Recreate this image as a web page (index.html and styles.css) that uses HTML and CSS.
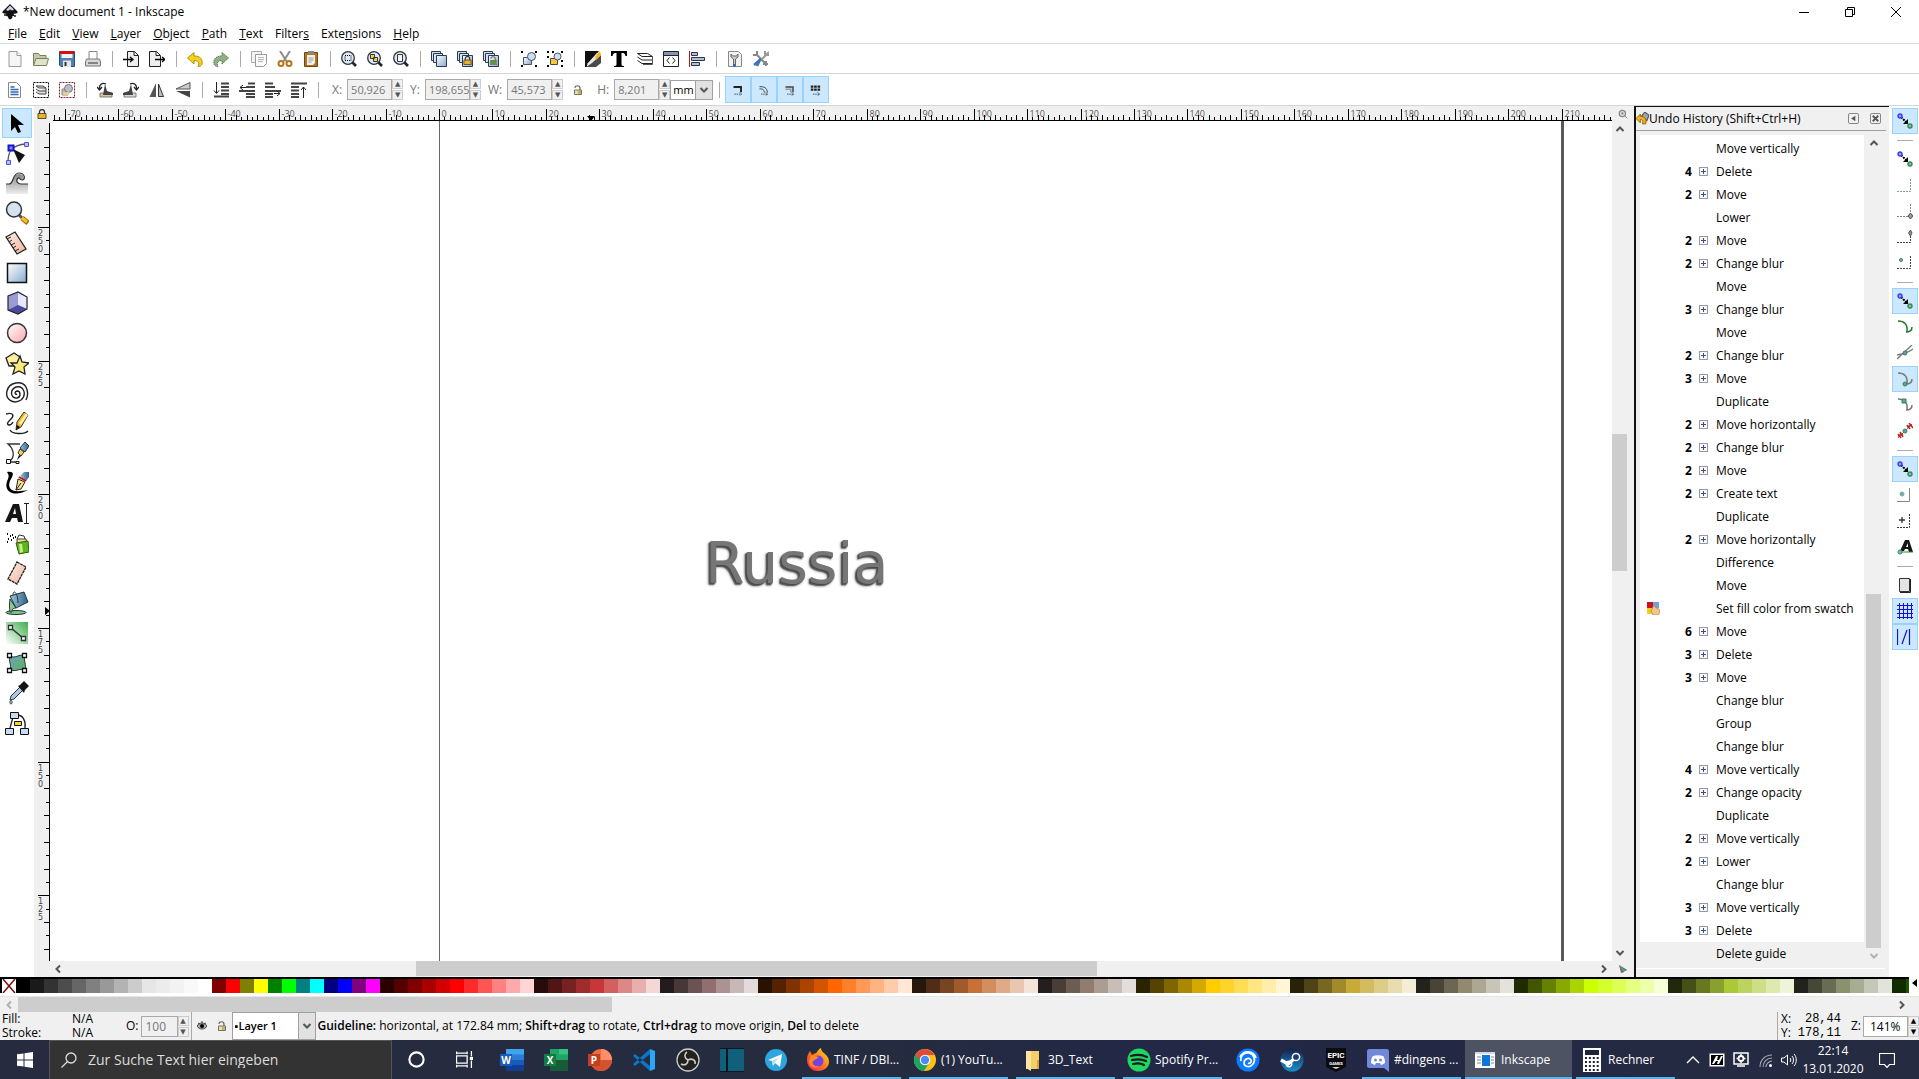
FILE: index.html
```html
<!DOCTYPE html>
<html lang="en">
<head>
<meta charset="utf-8">
<title>*New document 1 - Inkscape</title>
<link rel="stylesheet" href="styles.css">
</head>
<body>
<svg class="sprite" aria-hidden="true">
  <defs>
    <linearGradient id="gBlue" x1="0" y1="0" x2="1" y2="1"><stop offset="0" stop-color="#fff"/><stop offset="1" stop-color="#86aacf"/></linearGradient>
    <linearGradient id="gRed" x1="0" y1="0" x2="1" y2="1"><stop offset="0" stop-color="#fff"/><stop offset="1" stop-color="#ffa5ad"/></linearGradient>
    <linearGradient id="gPeach" x1="0" y1="0" x2="1" y2="1"><stop offset="0" stop-color="#fdeee8"/><stop offset="1" stop-color="#efb49c"/></linearGradient>
    <linearGradient id="gGreen" x1="0" y1="1" x2="1" y2="0"><stop offset="0" stop-color="#fff"/><stop offset="1" stop-color="#3fae4c"/></linearGradient>
    <linearGradient id="gWave" x1="0" y1="0" x2="0" y2="1"><stop offset="0" stop-color="#888"/><stop offset="1" stop-color="#eee"/></linearGradient>
    <linearGradient id="gMesh" x1="0" y1="0" x2="1" y2="1"><stop offset="0" stop-color="#6fa3c8"/><stop offset="1" stop-color="#5bb35a"/></linearGradient>
    <linearGradient id="gSteel" x1="0" y1="0" x2="1" y2="0"><stop offset="0" stop-color="#9cc7e0"/><stop offset="1" stop-color="#2f6187"/></linearGradient>
    <linearGradient id="gInk" x1="0" y1="0" x2="1" y2="1"><stop offset="0" stop-color="#000"/><stop offset="1" stop-color="#eee"/></linearGradient>
    <linearGradient id="gFire" x1="1" y1="0" x2="0" y2="1"><stop offset="0" stop-color="#ffe226"/><stop offset=".5" stop-color="#ff7a1a"/><stop offset="1" stop-color="#f5156c"/></linearGradient>
    <linearGradient id="gSteam" x1="0" y1="0" x2="0" y2="1"><stop offset="0" stop-color="#15224d"/><stop offset="1" stop-color="#1b8fce"/></linearGradient>
  </defs>
  <symbol id="snap" viewBox="0 0 16 16"><path d="M4 4l6 6" stroke="#000" stroke-width="2" stroke-dasharray="2 1"/><path d="M11 6v5H6z" fill="#000"/><circle cx="3" cy="3" r="2" fill="#8fa0ff" stroke="#3a3af0" stroke-width="1.4"/><circle cx="13" cy="13" r="2" fill="#8fb0d8" stroke="#2e8b45" stroke-width="1.4"/></symbol>
  <symbol id="lens" viewBox="0 0 16 16"><path d="M11 11l4 4" stroke="#223" stroke-width="2.6"/><circle cx="7" cy="7" r="6.3" fill="#dfe9f5" stroke="#2b3440" stroke-width="1.3"/></symbol>
  <symbol id="squares" viewBox="0 0 16 16"><path d="M.5.5h9v9h-9z" fill="#d3e2f3" stroke="#2a3b50"/><path d="M2.500 2.500h9v9h-9z" fill="#d3e2f3" stroke="#2a3b50"/><path d="M5.500 4.500h10v11h-10z" fill="url(#gBlue)" stroke="#2a3b50"/></symbol>
  <symbol id="bars" viewBox="0 0 16 16"><path d="M8 1.500h8M8 5h8M8 8.500h8M8 12h8M1 14.500h15" stroke="#444" stroke-width="2"/><path d="M3.500 0v11M1 8.500l2.500 3 2.500-3" fill="none" stroke="#222"/></symbol>
  <symbol id="lock" viewBox="0 0 10 10"><path d="M2.500 5V3a2.500 2.500 0 015 0v2" fill="none" stroke="#333" stroke-width="1.3"/><path d="M1 4.500h8V9.500H1z" fill="#e8b62a" stroke="#3d3110" stroke-width=".8"/></symbol>
  <symbol id="unlock" viewBox="0 0 10 10"><path d="M2 3c0-3 5-3 5 0v2" fill="none" stroke="#666" stroke-width="1.200"/><path d="M1.500 5h7v4.500h-7z" fill="#e9dcae" stroke="#555" stroke-width=".8"/><path d="M5 6h3v3H5z" fill="#c9b24c"/></symbol>
  <symbol id="up" viewBox="0 0 10 10"><path d="M1.500 7L5 3.500 8.500 7" fill="none" stroke="currentColor" stroke-width="2"/></symbol>
  <symbol id="down" viewBox="0 0 10 10"><path d="M1.500 3L5 6.500 8.500 3" fill="none" stroke="currentColor" stroke-width="2"/></symbol>
  <symbol id="left" viewBox="0 0 10 10"><path d="M7 1.500L3.500 5 7 8.500" fill="none" stroke="currentColor" stroke-width="2"/></symbol>
  <symbol id="right" viewBox="0 0 10 10"><path d="M3 1.500L6.500 5 3 8.500" fill="none" stroke="currentColor" stroke-width="2"/></symbol>
  <symbol id="curve" viewBox="0 0 16 16"><path d="M1 2c6 0 10 3 9 11M15 8c0 3-2 5-6 5" fill="none" stroke="currentColor" stroke-width="1.500"/></symbol>
</svg>

<header class="titlebar">
  <svg class="logo" viewBox="0 0 16 16"><path d="M8 0l7 7c1 1 1 2-1 2.500l-3 .5c2 1 2 2-1 2.500 1 1 0 2-2 3-2-1-2-2-2-3-3-.5-3-1.500-1-2.500l-3-.5C0 9 0 8 1 7z" fill="#111"/><path d="M8 1.500l4 4-2 1-2-1-2 1.500-2-1z" fill="#c9d6e8"/><path d="M2 11h3M12 12h2" stroke="#222" stroke-width="1.500"/></svg>
  <h1>*New document 1 - Inkscape</h1>
  <div class="winbtns">
    <button aria-label="Minimize"><svg viewBox="0 0 10 10"><path d="M0 5.500h10" stroke="#000"/></svg></button>
    <button aria-label="Restore"><svg viewBox="0 0 10 10"><path d="M.5 2.500h7v7h-7zM2.500 2.500v-2h7v7h-2" fill="none" stroke="#000"/></svg></button>
    <button aria-label="Close"><svg viewBox="0 0 10 10"><path d="M0 0l10 10M10 0L0 10" stroke="#000"/></svg></button>
  </div>
</header>

<nav class="menubar">
  <button><u>F</u>ile</button><button><u>E</u>dit</button><button><u>V</u>iew</button><button><u>L</u>ayer</button><button><u>O</u>bject</button><button><u>P</u>ath</button><button><u>T</u>ext</button><button>Filter<u>s</u></button><button>Exte<u>n</u>sions</button><button><u>H</u>elp</button>
</nav>

<div class="bar commands" role="toolbar" aria-label="Commands">
  <button aria-label="New"><svg viewBox="0 0 16 16"><path d="M2 .5h8l4 4v11H2z" fill="#f6f6f6" stroke="#999"/><path d="M10 .5v4h4" fill="#fff" stroke="#999"/></svg></button>
  <button aria-label="Open"><svg viewBox="0 0 16 16"><path d="M.5 14V2.500h5l1.500 2h6V8" fill="#c3c9a8" stroke="#77805c"/><path d="M.5 14.500L3 7.500h12.500l-2 7z" fill="#dfe3c9" stroke="#77805c"/></svg></button>
  <button aria-label="Save"><svg viewBox="0 0 16 16"><path d="M.5.5h15v15H2L.5 14z" fill="#4f7fb8" stroke="#2a4a77"/><path d="M2.500 0h11v7h-11z" fill="#f3f3f3"/><path d="M1 0h14v3H1z" fill="#d8100c"/><path d="M4 9.500h8V16H4z" fill="#e5e5e5"/><path d="M5.500 11h2v4h-2z" fill="#333"/></svg></button>
  <button aria-label="Print"><svg viewBox="0 0 16 16"><path d="M4 8V.5h8V8" fill="#fff" stroke="#888"/><path d="M1.500 8h13l1 3v4H.5v-4z" fill="#d8d8d8" stroke="#777"/><path d="M3 12h10" stroke="#666" stroke-width="1.500"/></svg></button>
  <i class="sep"></i>
  <button aria-label="Import"><svg viewBox="0 0 16 16"><path d="M4.500 .5h7l4 4v11h-11z" fill="#eee" stroke="#222"/><path d="M11 .5v4h4" fill="none" stroke="#222"/><path d="M0 8.500h9M7 6l3 2.500L7 11" fill="none" stroke="#000" stroke-width="1.300"/></svg></button>
  <button aria-label="Export"><svg viewBox="0 0 16 16"><path d="M.5.5h7l4 4v11H.5z" fill="#eee" stroke="#222"/><path d="M7 .5v4h4" fill="none" stroke="#222"/><path d="M6 8.500h9M13 6l3 2.500-3 2.500" fill="none" stroke="#000" stroke-width="1.300"/></svg></button>
  <i class="sep"></i>
  <button aria-label="Undo"><svg viewBox="0 0 16 16"><path d="M.5 7L7 1.500V5c6 0 9 3 8 8-1 2-2 2.500-4 2.500 2-4 0-6-4-6V13z" fill="#f2d21e" stroke="#b3900c"/></svg></button>
  <button aria-label="Redo"><svg viewBox="0 0 16 16"><path d="M15.500 7L9 1.500V5C3 5 0 8 1 13c1 2 2 2.500 4 2.500-2-4 0-6 4-6V13z" fill="#8fb086" stroke="#56814c" stroke-dasharray="1.500 .6"/></svg></button>
  <i class="sep"></i>
  <button aria-label="Copy"><svg viewBox="0 0 16 16"><path d="M.5.5h10v11H.5z" fill="#f3f3f3" stroke="#aaa"/><path d="M4.500 3.500h11v9l-3 3h-8z" fill="#fafafa" stroke="#999"/><path d="M7 6.500h6M7 8.500h6M7 10.500h5" stroke="#bbb"/></svg></button>
  <button aria-label="Cut"><svg viewBox="0 0 16 16"><path d="M3 0l7 11M13 0L6 11" stroke="#8d8d8d" stroke-width="2"/><circle cx="4" cy="12.500" r="2.500" fill="none" stroke="#b8741a" stroke-width="2"/><circle cx="12" cy="12.500" r="2.500" fill="none" stroke="#b8741a" stroke-width="2"/></svg></button>
  <button aria-label="Paste"><svg viewBox="0 0 16 16"><path d="M1.500 1.500h13v14h-13z" fill="#b0741e" stroke="#744708"/><path d="M4 4h8v8l-2 2H4z" fill="#f1f1f1"/><path d="M5 0h6v3H5z" fill="#888"/><path d="M5.500 7h5M5.500 9h5M5.500 11h3" stroke="#999"/></svg></button>
  <i class="sep"></i>
  <button aria-label="Zoom selection"><svg viewBox="0 0 16 16"><use href="#lens"/><path d="M4 4.500h6v5H4z" fill="none" stroke="#000" stroke-dasharray="1 1"/></svg></button>
  <button aria-label="Zoom drawing"><svg viewBox="0 0 16 16"><use href="#lens"/><path d="M3.500 3.500h4v4h-4zM6.500 6.500h4v4h-4z" fill="#f5cf50" stroke="#333"/></svg></button>
  <button aria-label="Zoom page"><svg viewBox="0 0 16 16"><use href="#lens"/><path d="M4.500 3.500h5v7h-5z" fill="#fff" stroke="#333"/></svg></button>
  <i class="sep"></i>
  <button aria-label="Duplicate"><svg viewBox="0 0 16 16"><use href="#squares"/></svg></button>
  <button aria-label="Clone"><svg viewBox="0 0 16 16"><use href="#squares"/><use href="#lock" x="6" y="5" width="9" height="9"/></svg></button>
  <button aria-label="Unlink clone"><svg viewBox="0 0 16 16"><use href="#squares"/><use href="#unlock" x="6" y="5" width="9" height="9"/><path d="M8 10h5v3H8z" fill="#5a9a35"/></svg></button>
  <i class="sep"></i>
  <button aria-label="Group"><svg viewBox="0 0 16 16"><path d="M0 0h2v2H0zM14 0h2v2h-2zM0 14h2v2H0zM14 14h2v2h-2z"/><path d="M2.500 6.500h8v7h-8z" fill="url(#gBlue)" stroke="#456"/><circle cx="10.500" cy="5.500" r="4" fill="#cfdff0" stroke="#456"/></svg></button>
  <button aria-label="Ungroup"><svg viewBox="0 0 16 16"><path d="M0 0h2v2H0zM14 0h2v2h-2zM0 14h2v2H0zM14 14h2v2h-2zM5 0h2v2H5zM0 5h2v2H0zM14 9h2v2h-2z"/><path d="M3.500 7.500h7v6h-7z" fill="#f5c93c" stroke="#543"/><circle cx="10.500" cy="5.500" r="3.500" fill="#cfdff0" stroke="#456"/></svg></button>
  <i class="sep"></i>
  <button aria-label="Fill and stroke"><svg viewBox="0 0 16 16"><path d="M0 0h14L2 14v2H0z" fill="#111"/><path d="M2 13L12 2l2 3-6 9z" fill="#e8e8e8"/><path d="M1 16l6-4 9-8v8l-5 4z" fill="#4a4a4a"/><path d="M10 6l5-6 1 4-5 5z" fill="#f4b71d"/></svg></button>
  <button aria-label="Text and font"><svg viewBox="0 0 16 16"><path d="M0 0h16v5h-1.500C14 2.500 13 2 10.500 2v11c0 1.500.5 2 2.500 2v1H3v-1c2 0 2.500-.5 2.500-2V2C3 2 2 2.500 1.500 5H0z"/></svg></button>
  <button aria-label="Layers"><svg viewBox="0 0 16 16"><path d="M.5 2.500h10l5 3H5zM.5 6l4.500 3h10.500M.5 9.500l4.500 3h10.500" fill="none" stroke="#222"/><path d="M15.500 5.500v8H6" fill="none" stroke="#555"/></svg></button>
  <button aria-label="XML editor"><svg viewBox="0 0 16 16"><path d="M.5.5h15v15H.5z" fill="#fff" stroke="#223"/><path d="M1 1h14v3H1z" fill="#8595ab"/><path d="M1 4.500h14" stroke="#223"/><path d="M6.500 6.500L4 9.500l2.500 3M9.500 6.500l2.500 3-2.500 3" fill="none" stroke="#222"/></svg></button>
  <button aria-label="Align"><svg viewBox="0 0 16 16"><path d="M.5 0v16" stroke="#b01818"/><path d="M2.500 1.500h6v3h-6zM2.500 6.500h13v3h-13zM2.500 11.500h8v3h-8z" fill="#a9c2d9" stroke="#334"/></svg></button>
  <i class="sep"></i>
  <button aria-label="Preferences"><svg viewBox="0 0 16 16"><path d="M1.500.5h10l3 3v12h-13z" fill="#f2f2f2" stroke="#888"/><path d="M4 3v3l2.500 2v7h2V8L11 6V3L9.500 5h-4z" fill="#ccc" stroke="#666"/><path d="M6.500 13h2v3h-2z" fill="#3567b5"/></svg></button>
  <button aria-label="Document properties"><svg viewBox="0 0 16 16"><path d="M4 0v4H0M3 3l10 10" fill="none" stroke="#888" stroke-width="2"/><path d="M10 13h5M13 10v5" stroke="#888" stroke-width="2"/><path d="M16 1l-8 8M12 0v4h4" fill="none" stroke="#999" stroke-width="2"/><path d="M8 8l-7 6M7 9l-3 6" stroke="#3b73c0" stroke-width="2.500"/></svg></button>
</div>

<div class="bar controls" role="toolbar" aria-label="Tool controls">
  <button aria-label="Select all"><svg viewBox="0 0 16 16"><path d="M1.500.5h8l4 4v11h-12z" fill="#fff" stroke="#888"/><path d="M3.500 5h4M3.500 7.500h8M3.500 10h8M3.500 12.500h8" stroke="#2f68b0" stroke-width="1.400"/></svg></button>
  <button aria-label="Select all in layers"><svg viewBox="0 0 16 16"><path d="M.5.500h15v15H.5z" fill="none" stroke="#000" stroke-dasharray="2 1"/><path d="M3 4h7l3 2H6zM3 7l3 2h7M3 10l3 2h7V6" fill="#ddd" stroke="#444"/></svg></button>
  <button aria-label="Deselect"><svg viewBox="0 0 16 16"><path d="M.5.5h15v15H.5z" fill="none" stroke="#8c1c1c" stroke-dasharray="2 1"/><path d="M3 7h6v6H3z" fill="#bbb" stroke="#888"/><circle cx="9.500" cy="6.500" r="4" fill="#b9bfc6" stroke="#777"/><path d="M4 10h6v3H4z" fill="#e6cf96"/></svg></button>
  <i class="sep"></i>
  <button aria-label="Rotate left"><svg viewBox="0 0 16 16"><path d="M3 11h12v4H3z" fill="#d8c59a" stroke="#666" stroke-width=".8"/><path d="M8 2l2 7 6 2v2H6z" fill="#444"/><path d="M9 2C5 0 2 3 2.500 7M0 5l2.500 3L5 5" fill="none" stroke="#222" stroke-width="1.300"/></svg></button>
  <button aria-label="Rotate right"><svg viewBox="0 0 16 16"><path d="M1 11h12v4H1z" fill="#d5dbe2" stroke="#666" stroke-width=".8"/><path d="M8 2L6 9l-6 2v2h10z" fill="#444"/><path d="M7 2c4-2 7 1 6.500 5M11 5l2.500 3L16 5" fill="none" stroke="#222" stroke-width="1.300"/></svg></button>
  <button aria-label="Flip horizontal"><svg viewBox="0 0 16 16"><path d="M7 1v14H.5z" fill="#555"/><path d="M9.500 2v12.500h5z" fill="#bbb" stroke="#333"/></svg></button>
  <button aria-label="Flip vertical"><svg viewBox="0 0 16 16"><path d="M1 7h14V.5z" fill="#ccc" stroke="#555"/><path d="M1 9h14v6.500z" fill="#444"/></svg></button>
  <i class="sep"></i>
  <button aria-label="Lower to bottom"><svg viewBox="0 0 16 16"><use href="#bars"/></svg></button>
  <button aria-label="Lower"><svg viewBox="0 0 16 16"><path d="M9 1.500h7M7 5h9M0 9h16M7 12h9M7 15h9" stroke="#444" stroke-width="2"/><path d="M1 5.500h6M4 3L1 5.500 4 8" fill="none" stroke="#222"/></svg></button>
  <button aria-label="Raise"><svg viewBox="0 0 16 16"><path d="M0 1.500h8M0 5h10M0 9h16M0 12h8M0 15h8" stroke="#444" stroke-width="2"/><path d="M9 11.500h6M12 9l3 2.500-3 2.500" fill="none" stroke="#222"/></svg></button>
  <button aria-label="Raise to top"><svg viewBox="0 0 16 16"><path d="M0 1.500h16M0 5h8M0 8.500h8M0 12h8M0 15h8" stroke="#444" stroke-width="2"/><path d="M12.500 16V5M10 8l2.500-3L15 8" fill="none" stroke="#222"/></svg></button>
  <i class="sep"></i>
  <div class="field fx"><label for="fx">X:</label><input id="fx" type="text" value="50,926" disabled><span class="spin"><button disabled aria-label="Increase X">▲</button><button disabled aria-label="Decrease X">▼</button></span></div>
  <div class="field"><label for="fy">Y:</label><input id="fy" type="text" value="198,655" disabled><span class="spin"><button disabled aria-label="Increase Y">▲</button><button disabled aria-label="Decrease Y">▼</button></span></div>
  <div class="field"><label for="fw">W:</label><input id="fw" type="text" value="45,573" disabled><span class="spin"><button disabled aria-label="Increase W">▲</button><button disabled aria-label="Decrease W">▼</button></span></div>
  <button class="ratio" aria-label="Lock ratio"><svg viewBox="0 0 10 10"><use href="#unlock"/></svg></button>
  <div class="field fh"><label for="fh">H:</label><input id="fh" type="text" value="8,201" disabled><span class="spin"><button disabled aria-label="Increase H">▲</button><button disabled aria-label="Decrease H">▼</button></span></div>
  <div class="combo"><select aria-label="Unit"><option>mm</option></select><svg viewBox="0 0 10 10"><use href="#down"/></svg></div>
  <i class="sep"></i>
  <button class="on" aria-label="Scale stroke"><svg viewBox="0 0 16 16"><path d="M2 4h10v7" fill="none" stroke="#222" stroke-width="2.500"/><path d="M3 13.500h9M10 11l3 2.500-3 2.500" fill="none" stroke="#222" stroke-dasharray="2 1"/></svg></button>
  <button class="on" aria-label="Scale corners"><svg viewBox="0 0 16 16"><path d="M2 3.500c6 0 10 1 10.500 8M2 6.500c5 0 6 1 6.500 5" fill="none" stroke="#444" stroke-width="1.300"/><path d="M4 13.500h8M10 11l3 2.500-3 2.500" fill="none" stroke="#222" stroke-dasharray="2 1"/></svg></button>
  <button class="on" aria-label="Move gradients"><svg viewBox="0 0 16 16"><path d="M2 4h10v7" fill="none" stroke="#444" stroke-width="2"/><path d="M2 7h7v4" fill="none" stroke="#999" stroke-width="2"/><path d="M4 13.500h8M10 11l3 2.500-3 2.500" fill="none" stroke="#222" stroke-dasharray="2 1"/></svg></button>
  <button class="on" aria-label="Move patterns"><svg viewBox="0 0 16 16"><path d="M1 3.500h13M1 7.500h13" stroke="#222" stroke-width="3" stroke-dasharray="3.500 1"/><path d="M4 13.500h8M10 11l3 2.500-3 2.500" fill="none" stroke="#222" stroke-dasharray="2 1"/></svg></button>
</div>

<main class="work">
  <div class="toolbox" role="toolbar" aria-label="Tools">
    <button class="on" aria-label="Select"><svg viewBox="0 0 24 24"><path d="M6 3v17l4-4 3 6 3-1-3-7h6z"/></svg></button>
    <button aria-label="Nodes"><svg viewBox="0 0 24 24"><path d="M3 21C3 9 8 4 21 3" fill="none" stroke="#555" stroke-width="1.300"/><path d="M8 8l12 6-6 8z" fill="#111"/><path d="M3.500 4.500h5v5h-5z" fill="#7d8bff" stroke="#1414cc" stroke-width="2"/><path d="M19.500 1.500h4v4h-4zM1.500 19.500h4v4h-4z" fill="#b9bdff" stroke="#5656d8"/></svg></button>
    <button aria-label="Tweak"><svg viewBox="0 0 24 24"><path d="M1 13h3c4 0 3-10 10-10 5 0 6 5 3 6-2 0-2-3-4-2-3 3 0 6 3 6h7v10H1z" fill="url(#gWave)"/><path d="M1 13h3c5 0 3-11 10-11 6 0 7 7 3 7-2 0-2-3-4-2-3 3 0 6 3 6h7" fill="none" stroke="#333" stroke-width="1.200"/></svg></button>
    <button aria-label="Zoom"><svg viewBox="0 0 24 24"><path d="M14 14l3 3" stroke="#555" stroke-width="3"/><path d="M17 17l6 5" stroke="#a06a00" stroke-width="5"/><path d="M17 17l5 4" stroke="#ffc02c" stroke-width="3"/><circle cx="9" cy="8.500" r="7.500" fill="#d4e2f2" stroke="#333" stroke-width="1.500"/></svg></button>
    <button aria-label="Measure"><svg viewBox="0 0 24 24"><path d="M1 6l9-5 11 17-9 5z" fill="url(#gPeach)" stroke="#222" stroke-width="1.300"/><path d="M2 8l4-2M4 11l3-2M6 14l4-2M8 17l3-2M10 20l4-2" stroke="#222"/></svg></button>
    <button aria-label="Rectangle"><svg viewBox="0 0 24 24"><path d="M2.500 2.500h19v19h-19z" fill="url(#gBlue)" stroke="#111" stroke-width="1.500"/></svg></button>
    <button aria-label="3D box"><svg viewBox="0 0 24 24"><path d="M3 5l10-4 9 5v12l-9 5-10-4z" fill="#9a9ad4"/><path d="M13 2l9 4v12l-9-4z" fill="#e8e8ff"/><path d="M3 19l10-5 9 4-9 5z" fill="#4b4b9e"/><path d="M3 5l10-4 9 5v12l-9 5-10-4z" fill="none" stroke="#223" stroke-width="1.200"/></svg></button>
    <button aria-label="Ellipse"><svg viewBox="0 0 24 24"><circle cx="12" cy="12" r="9.500" fill="url(#gRed)" stroke="#333" stroke-width="1.500"/></svg></button>
    <button aria-label="Star"><svg viewBox="0 0 24 24"><path d="M1 7l8-5 6 4-1 9H4z" fill="#fdf0a0" stroke="#222" stroke-width="1.300"/><path d="M15 5l2 6 7 1-5 4 1 7-6-3-6 3 2-7-4-4 6 0z" fill="#fbe87a" stroke="#222" stroke-width="1.300"/></svg></button>
    <button aria-label="Spiral"><svg viewBox="0 0 24 24"><path d="M12 13c-2 1-3-2 0-3 4 0 4 6 0 7-6 1-8-8-1-11C19 4 22 14 16 19 8 24 0 18 2 10 4 1 17-1 21 6c2 4 2 9 0 13" fill="none" stroke="#222" stroke-width="1.400"/></svg></button>
    <button aria-label="Pencil"><svg viewBox="0 0 24 24"><path d="M1 3c8-2 8 2 5 5s-5 5-2 6c2 0 3-1 4-3M5 19c2 4 14 5 18 1" fill="none" stroke="#222" stroke-width="1.400"/><path d="M11 19l1-8 7-10 4 3-7 12z" fill="#f5b52c" stroke="#333"/><path d="M14 12l7-10 2 2-7 10z" fill="#fff09a"/><path d="M11 19l1-5 3 2z" fill="#111"/></svg></button>
    <button aria-label="Pen"><svg viewBox="0 0 24 24"><path d="M12 21H4c8-6 3-15-1-18h12" fill="none" stroke="#333" stroke-width="1.300"/><path d="M15 7l5-6 4 4-4 6z" fill="url(#gSteel)" stroke="#234"/><path d="M13 12l2-4 4 3-3 4z" fill="#f5cf50" stroke="#333"/><path d="M12 19l2-5 2 1z"/><path d="M1.500 18.500h4v4h-4zM11 20.500h3v2h-3z" fill="#fff" stroke="#111"/></svg></button>
    <button aria-label="Calligraphy"><svg viewBox="0 0 24 24"><path d="M2 1c7-1 7 2 4 7s-2 9 1 11 11 1 16 0c-5 3-13 5-18 2C0 18 1 12 3 8c1-3 1-4-1-7z"/><path d="M15 5l4-4h5v5l-3 4z" fill="url(#gSteel)"/><path d="M14 6l7 4" stroke="#c11" stroke-width="2"/><path d="M11 19l2-11 7 3-4 7z" fill="#f8df8b" stroke="#222"/><path d="M11 19l5-7" stroke="#222"/></svg></button>
    <button aria-label="Text"><svg viewBox="0 0 24 24"><path d="M0 21L8 3h6l4 18h-5l-1-4H7l-2 4zM8 13h3l-1-6z" fill="#151515" fill-rule="evenodd"/><path d="M19 2.500h5M21.500 3v19M19 22.500h5" stroke="#222"/></svg></button>
    <button aria-label="Spray"><svg viewBox="0 0 24 24"><path d="M2 3h1M5 5h1M3 8h1M7 4h1M8 7h1M6 9h1M2 11h1M10 6h1" stroke="#000" stroke-width="2"/><path d="M12 8l2-4 5 1 1 3" fill="#fff" stroke="#333"/><path d="M12 8l9 0 1 4-10 1z" fill="#e9d9a0" stroke="#543"/><path d="M11 12l12-2 1 11-10 2z" fill="#5fb51e" stroke="#2e5c0c"/><path d="M14 13l3 0 1 8-3 1z" fill="#c4ef8a"/></svg></button>
    <button aria-label="Eraser"><svg viewBox="0 0 24 24"><path d="M12 1l9 5-9 17-9-5z" fill="url(#gPeach)" stroke="#222" stroke-width="1.300" stroke-dasharray="3 .6"/></svg></button>
    <button aria-label="Paint bucket"><svg viewBox="0 0 24 24"><ellipse cx="11" cy="21.500" rx="10" ry="2" fill="#7fc28a" stroke="#233"/><path d="M5 8l6 9c-5 0-4 4-4 4H5s-1-6 0-13z" fill="#8acb98" stroke="#233"/><path d="M5 5L19 1l4 10-12 6z" fill="url(#gSteel)" stroke="#233"/><path d="M8 4c0-6 5-3 5 8" fill="none" stroke="#333"/></svg></button>
    <button aria-label="Gradient"><svg viewBox="0 0 24 24"><path d="M1 1h22v22H1z" fill="url(#gGreen)"/><path d="M6 7l12 10" stroke="#333" stroke-width="1.500"/><path d="M3.500 4.500h4v4h-4zM16.500 15.500h4v4h-4z" fill="#fff" stroke="#333" stroke-width="1.300"/></svg></button>
    <button aria-label="Mesh"><svg viewBox="0 0 24 24"><path d="M5 5c5 3 9-2 15-1-2 6 2 10 0 15-5-2-9 2-15 0 2-5-2-9 0-14z" fill="url(#gMesh)" stroke="#333"/><path d="M2.500 2.500h4v4h-4zM17.500 2.500h4v4h-4zM2.500 17.500h4v4h-4zM17.500 17.500h4v4h-4z" fill="#fff" stroke="#111" stroke-width="1.300"/></svg></button>
    <button aria-label="Dropper"><svg viewBox="0 0 24 24"><path d="M5 19l1-4 9-9 3 3-9 9z" fill="#a8c8e6" stroke="#333"/><path d="M13 5l2-1 4-4 5 5-4 4-1 3z" fill="#151515"/><path d="M6 19c-2 2-1 4 0 4s2-2 0-4z" fill="#9cc3e6" stroke="#345"/></svg></button>
    <button aria-label="Connector"><svg viewBox="0 0 24 24"><path d="M8 6L5 17M12 4c6 0 9 6 8 13" fill="none" stroke="#222" stroke-width="1.300"/><path d="M5.500 1.500h8v6h-8zM.5 17.500h8v6h-8zM15.500 17.500h8v6h-8z" fill="#c7dcf2" stroke="#111"/><path d="M9.500 10.500h7v4h-7z" fill="#ffd21f" stroke="#111"/></svg></button>
  </div>

  <section class="canvas-area">
    <div class="corner"><svg viewBox="0 0 10 10"><use href="#lock"/></svg></div>
    <div class="ruler-h" id="rulerH"></div>
    <div class="corner"><svg viewBox="0 0 16 16"><circle cx="7" cy="7" r="5" fill="#ddd" stroke="#888" stroke-width="2"/><path d="M5 7h4M7 5v4M11 11l4 4" stroke="#888" stroke-width="1.500"/></svg></div>
    <div class="ruler-v" id="rulerV"></div>
    <div class="canvas">
      <div class="page"><span class="art">Russia</span></div>
    </div>
    <div class="scroll v"><svg viewBox="0 0 10 10"><use href="#up"/></svg><i style="flex-grow:298"></i><b style="flex-grow:137"></b><i style="flex-grow:375"></i><svg viewBox="0 0 10 10"><use href="#down"/></svg></div>
    <div class="corner"></div>
    <div class="scroll h"><svg viewBox="0 0 10 10"><use href="#left"/></svg><i style="flex-grow:350"></i><b style="flex-grow:681"></b><i style="flex-grow:499"></i><svg viewBox="0 0 10 10"><use href="#right"/></svg></div>
    <div class="corner"><svg viewBox="0 0 10 10"><path d="M1 1l8 5-5 3z" fill="#6a8"/><path d="M1 1l2 8 3-1z" fill="#866"/><path d="M1 1l8 5-2 1z" fill="#579"/></svg></div>
  </section>

  <aside class="dock">
    <div class="dock-head">
      <svg viewBox="0 0 12 12"><path d="M5 4l3-4 4 3-2 5z" fill="#9aa7b5" stroke="#556"/><path d="M0 6l4-4v2c4 0 6 2 5 7H6c1-3 0-4-2-4v3z" fill="#f0b41c" stroke="#8a5a06" stroke-width=".8"/></svg>
      <h2>Undo History (Shift+Ctrl+H)</h2>
      <button aria-label="Iconify"><svg viewBox="0 0 12 12"><rect x=".5" y=".5" width="11" height="11" rx="1.500" fill="none" stroke="#777"/><path d="M8 3v6L3.500 6z" fill="#555"/></svg></button>
      <button aria-label="Close dialog"><svg viewBox="0 0 12 12"><rect x=".5" y=".5" width="11" height="11" rx="1.500" fill="none" stroke="#777"/><path d="M3 3l6 6M9 3L3 9" stroke="#555" stroke-width="2"/></svg></button>
    </div>
    <div class="dock-body">
      <ul class="history">
        <li>Move vertically</li>
        <li><b>4</b><button aria-label="Expand"></button>Delete</li>
        <li><b>2</b><button aria-label="Expand"></button>Move</li>
        <li>Lower</li>
        <li><b>2</b><button aria-label="Expand"></button>Move</li>
        <li><b>2</b><button aria-label="Expand"></button>Change blur</li>
        <li>Move</li>
        <li><b>3</b><button aria-label="Expand"></button>Change blur</li>
        <li>Move</li>
        <li><b>2</b><button aria-label="Expand"></button>Change blur</li>
        <li><b>3</b><button aria-label="Expand"></button>Move</li>
        <li>Duplicate</li>
        <li><b>2</b><button aria-label="Expand"></button>Move horizontally</li>
        <li><b>2</b><button aria-label="Expand"></button>Change blur</li>
        <li><b>2</b><button aria-label="Expand"></button>Move</li>
        <li><b>2</b><button aria-label="Expand"></button>Create text</li>
        <li>Duplicate</li>
        <li><b>2</b><button aria-label="Expand"></button>Move horizontally</li>
        <li>Difference</li>
        <li>Move</li>
        <li><svg viewBox="0 0 13 13"><path d="M0 0h6v6H0z" fill="#c8141c"/><path d="M6 0h6v6H6z" fill="#6fa0dc"/><path d="M0 6h6v6H0z" fill="#f2cf1d"/><path d="M6 5l1-2 2 3 3 1 1 3-2 3H6L4 9z" fill="#efc68c" stroke="#b5804a" stroke-width=".7"/></svg>Set fill color from swatch</li>
        <li><b>6</b><button aria-label="Expand"></button>Move</li>
        <li><b>3</b><button aria-label="Expand"></button>Delete</li>
        <li><b>3</b><button aria-label="Expand"></button>Move</li>
        <li>Change blur</li>
        <li>Group</li>
        <li>Change blur</li>
        <li><b>4</b><button aria-label="Expand"></button>Move vertically</li>
        <li><b>2</b><button aria-label="Expand"></button>Change opacity</li>
        <li>Duplicate</li>
        <li><b>2</b><button aria-label="Expand"></button>Move vertically</li>
        <li><b>2</b><button aria-label="Expand"></button>Lower</li>
        <li>Change blur</li>
        <li><b>3</b><button aria-label="Expand"></button>Move vertically</li>
        <li><b>3</b><button aria-label="Expand"></button>Delete</li>
        <li class="current">Delete guide</li>
      </ul>
      <div class="scroll v"><svg viewBox="0 0 10 10"><use href="#up"/></svg><i style="flex-grow:443"></i><b style="flex-grow:354"></b><svg class="dim" viewBox="0 0 10 10"><use href="#down"/></svg></div>
    </div>
  </aside>

  <div class="snapbar" role="toolbar" aria-label="Snapping">
    <button class="on" aria-label="Snap"><svg><use href="#snap"/></svg></button>
    <i class="sep"></i>
    <button aria-label="Bounding boxes"><svg><use href="#snap"/></svg></button>
    <button aria-label="Box edges"><svg viewBox="0 0 16 16"><path d="M0 14.500h13.500V1" fill="none" stroke="#7fa285" stroke-dasharray="2 1"/></svg></button>
    <button aria-label="Box corners"><svg viewBox="0 0 16 16"><path d="M0 13.500h13.500V0" fill="none" stroke="#888" stroke-dasharray="2 1"/><path d="M13.500 10l2.500 3-2.500 3-2.500-3z" fill="#8a9a8c" stroke="#555"/></svg></button>
    <button aria-label="Edge midpoints"><svg viewBox="0 0 16 16"><path d="M0 13.500h13.500V0" fill="none" stroke="#444" stroke-dasharray="2 1"/><path d="M13.500 1l1.500 3-1.500 3-2-3z" fill="#8a9a8c" stroke="#555"/></svg></button>
    <button aria-label="Box centers"><svg viewBox="0 0 16 16"><path d="M0 13.500h13.500V1" fill="none" stroke="#444" stroke-dasharray="2 1"/><circle cx="4" cy="5" r="1.500" fill="#9ab" stroke="#497a50"/></svg></button>
    <i class="sep"></i>
    <button class="on" aria-label="Snap nodes"><svg><use href="#snap"/></svg></button>
    <button class="path" aria-label="Snap to paths"><svg><use href="#curve"/></svg></button>
    <button aria-label="Path intersections"><svg viewBox="0 0 16 16"><path d="M0 14L15 0M0 10c6-1 12-3 16-6" fill="none" stroke="#777" stroke-width="1.300"/><circle cx="8" cy="8" r="2" fill="#6a9ab0" stroke="#2e8b45"/></svg></button>
    <button class="on" aria-label="Cusp nodes"><svg viewBox="0 0 16 16"><use href="#curve"/><circle cx="8" cy="13" r="2" fill="#6a9ab0" stroke="#2e8b45"/></svg></button>
    <button aria-label="Smooth nodes"><svg viewBox="0 0 16 16"><use href="#curve"/><path d="M5 2h4v4H5z" fill="#6a9ab0" stroke="#2e8b45"/></svg></button>
    <button aria-label="Line midpoints"><svg viewBox="0 0 16 16"><path d="M1 15L15 1" stroke="#777"/><path d="M1 11l3 4M3 9l3 5M10 2l3 4M12 0l4 5M1 13l5-2M10 4l5-2" stroke="#c22222" stroke-width="1.500"/><circle cx="8" cy="8" r="2" fill="#6a9ab0" stroke="#2e8b45"/></svg></button>
    <i class="sep"></i>
    <button class="on" aria-label="Other points"><svg><use href="#snap"/></svg></button>
    <button aria-label="Object centers"><svg viewBox="0 0 16 16"><path d="M0 14.500h12.500V1" fill="none" stroke="#888"/><circle cx="5" cy="7" r="2" fill="#6ab07a" stroke="#8ab"/></svg></button>
    <button aria-label="Rotation centers"><svg viewBox="0 0 16 16"><path d="M0 14.500h12.500V1" fill="none" stroke="#333" stroke-dasharray="2 1"/><path d="M2 7h6M5 4v6" stroke="#333" stroke-width="1.300"/></svg></button>
    <button aria-label="Text baselines"><svg viewBox="0 0 16 16"><path d="M3 12L8 1h4l4 12h-4l-1-3H8l-1 2zM9 8h2V4z" fill="#151515" fill-rule="evenodd"/><path d="M3 13h13" stroke="#2e8b45"/><circle cx="3" cy="13" r="2" fill="#8ab0d0" stroke="#2e8b45"/></svg></button>
    <i class="sep"></i>
    <button aria-label="Page border"><svg viewBox="0 0 16 16"><path d="M2.500 1.500h10v13h-10z" fill="#e4e4e4" stroke="#333"/><path d="M13.500 2v13.500H3" fill="none" stroke="#222"/></svg></button>
    <button class="on" aria-label="Grids"><svg viewBox="0 0 16 16"><path d="M0 2.500h16M0 6.500h16M0 10.500h16M0 14.500h16M2.500 0v16M6.500 0v16M10.500 0v16M14.500 0v16" stroke="#1010e0"/></svg></button>
    <button class="on" aria-label="Guides"><svg viewBox="0 0 16 16"><path d="M.5 0v16M12.500 0v16M5 15L10 1" stroke="#1010e0" stroke-width="1.200"/></svg></button>
  </div>
</main>

<section class="palette">
  <div class="swatches" id="swatches"></div>
  <button aria-label="Palette menu"><svg viewBox="0 0 5 8"><path d="M5 0v8L0 4z"/></svg></button>
</section>
<div class="scroll h pal"><svg class="dim" viewBox="0 0 10 10"><use href="#left"/></svg><b style="flex-grow:591"></b><i style="flex-grow:1276"></i><svg viewBox="0 0 10 10"><use href="#right"/></svg></div>

<footer class="status">
  <dl class="style"><dt>Fill:</dt><dd>N/A</dd><dt>Stroke:</dt><dd>N/A</dd></dl>
  <div class="field"><label for="op">O:</label><input id="op" type="text" value="100" disabled><span class="spin"><button disabled aria-label="Increase opacity">▲</button><button disabled aria-label="Decrease opacity">▼</button></span></div>
  <i class="vsep"></i>
  <button class="mini" aria-label="Layer visibility"><svg viewBox="0 0 10 10"><path d="M0 5c2-4 8-4 10 0-2 4-8 4-10 0zM1 2l2 1M5 0v2M9 2L7 3" fill="#aaa" stroke="#444"/><circle cx="5" cy="5" r="2"/></svg></button>
  <button class="mini" aria-label="Layer lock"><svg viewBox="0 0 10 10"><use href="#unlock"/></svg></button>
  <div class="combo layer"><select aria-label="Layer"><option>▪Layer 1</option></select><svg viewBox="0 0 10 10"><use href="#down"/></svg></div>
  <p class="hint"><b>Guideline:</b> horizontal, at 172.84 mm; <b>Shift+drag</b> to rotate, <b>Ctrl+drag</b> to move origin, <b>Del</b> to delete</p>
  <i class="vsep"></i>
  <dl class="coords"><dt>X:</dt><dd>28,44</dd><dt>Y:</dt><dd>178,11</dd></dl>
  <div class="field zoom"><label for="zm">Z:</label><input id="zm" type="text" value="141%"><span class="spin"><button aria-label="Zoom in">▲</button><button aria-label="Zoom out">▼</button></span></div>
</footer>

<div class="taskbar">
  <button class="start" aria-label="Start"><svg viewBox="0 0 16 16"><path d="M0 2.300L6.500 1.400v6.100H0zM7.500 1.200L16 0v7.500H7.500zM0 8.500h6.500v6.100L0 13.700zM7.500 8.500H16V16l-8.500-1.200z" fill="#fff"/></svg></button>
  <div class="search"><svg viewBox="0 0 16 16"><circle cx="10" cy="6" r="5" fill="none" stroke="#ddd" stroke-width="1.300"/><path d="M6.500 9.500L.5 15.500" stroke="#ddd" stroke-width="1.300"/></svg><input type="text" aria-label="Search" placeholder="Zur Suche Text hier eingeben"></div>
  <button class="sys" aria-label="Cortana"><svg viewBox="0 0 16 16"><circle cx="8" cy="8" r="6.700" fill="none" stroke="#fff" stroke-width="2"/></svg></button>
  <button class="sys" aria-label="Task view"><svg viewBox="0 0 16 16"><path d="M.5 4.500h10v7H.5zM.5 3V.500M10.500 3V.5M.5 2h10M.5 15.500V13M10.500 15.500V13M.5 14h10M14.500 0v5M14.500 9v7" fill="none" stroke="#fff" stroke-width="1.200"/><path d="M13 5.500h3v3h-3z" fill="#fff"/></svg></button>
  <button class="app" aria-label="Word"><svg viewBox="0 0 24 24"><path d="M6 1h18v6H6z" fill="#41a5ee"/><path d="M6 6.500h18V12H6z" fill="#2b7cd3"/><path d="M6 12h18v5.500H6z" fill="#185abd"/><path d="M6 17h18v6H6z" fill="#103f91"/><path d="M0 6h12v12H0z" fill="#185abd"/><text x="6" y="16" text-anchor="middle">W</text></svg></button>
  <button class="app" aria-label="Excel"><svg viewBox="0 0 24 24"><path d="M6 1h18v6H6z" fill="#33c481"/><path d="M6 6.500h18V12H6z" fill="#21a366"/><path d="M6 12h18v11H6z" fill="#185c37"/><path d="M6 1h9v11H6z" fill="#21a366"/><path d="M0 6h12v12H0z" fill="#107c41"/><text x="6" y="16" text-anchor="middle">X</text></svg></button>
  <button class="app" aria-label="PowerPoint"><svg viewBox="0 0 24 24"><circle cx="13" cy="12" r="11" fill="#ed6c47"/><path d="M13 1a11 11 0 0111 11H13z" fill="#ff8f6b"/><path d="M2 12h22a11 11 0 01-22 0z" fill="#d35230"/><path d="M0 6h12v12H0z" fill="#c43e1c"/><text x="6" y="16" text-anchor="middle">P</text></svg></button>
  <button class="app" aria-label="Visual Studio Code"><svg viewBox="0 0 24 24"><path d="M1 8l2-2 15 12v5zM1 16l2 2L18 6V1z" fill="#0a78c8"/><path d="M18 1l5 2v18l-5 2z" fill="#2aa8f5"/></svg></button>
  <button class="app" aria-label="OBS"><svg viewBox="0 0 24 24"><circle cx="12" cy="12" r="11" fill="#23211f" stroke="#ccc" stroke-width="1.300"/><path d="M12 12c-4-2-4-6-1-8M12 12c4-2 8 0 7 4M12 12c0 4-3 6-7 4" fill="none" stroke="#ccc" stroke-width="1.600"/></svg></button>
  <button class="app" aria-label="Terminal"><svg viewBox="0 0 24 24"><path d="M0 0h24v24H0z" fill="#125f7b"/><path d="M0 0h24v1H0zM0 23h24v1H0zM6 0h2v24H6z" fill="#051820"/></svg></button>
  <button class="app" aria-label="Telegram"><svg viewBox="0 0 24 24"><circle cx="12" cy="12" r="11" fill="#2ca5e0"/><path d="M4 12l14-6-2 13-5-4-2 3-1-5z" fill="#fff"/><path d="M8 13l7-4-5 6-1 3z" fill="#b8d8ea"/></svg></button>
  <button class="win"><svg viewBox="0 0 24 24"><path d="M12 23C5 23 1 18 1 12c0-4 1-6 3-9l2 4c3-2 5-2 5-3 1-2 2-3 4-4 0 3 2 4 4 6 2 2 4 4 4 8 0 5-5 9-11 9z" fill="url(#gFire)"/><circle cx="12" cy="13" r="5.500" fill="#7542e5"/><path d="M5 8c3-1 6 0 8 2-3 0-3 2-6 3-2 3 1 6 6 5-5 4-10 0-10-5z" fill="#ff8a1f"/></svg><span>TINF / DBI...</span></button>
  <button class="win"><svg viewBox="0 0 24 24"><circle cx="12" cy="12" r="11" fill="#fbc116"/><path d="M12 7h9.500A11 11 0 002.500 6.500L7 15z" fill="#de4a3c"/><path d="M2.500 6.500A11 11 0 0011 23l5-8-8-1z" fill="#1da462"/><circle cx="12" cy="12" r="5.200" fill="#fff"/><circle cx="12" cy="12" r="4.200" fill="#4a8af4"/></svg><span>(1) YouTu...</span></button>
  <button class="win"><svg viewBox="0 0 24 24"><path d="M6 3h13v18H6z" fill="#f5cf68"/><path d="M6 3h5v20l-5-3z" fill="#ffe6a0"/><path d="M17 12h2v9h-2z" fill="#d9a63c"/></svg><span>3D_Text</span></button>
  <button class="win"><svg viewBox="0 0 24 24"><circle cx="12" cy="12" r="11.500" fill="#1ed760"/><path d="M4 8c6-2 12-1 16 1M5 12c5-1 10-1 14 1M6 16c4-1 8-1 11 1" fill="none" stroke="#191b22" stroke-width="2.200" stroke-linecap="round"/></svg><span>Spotify Pr...</span></button>
  <button class="app" aria-label="Ubisoft"><svg viewBox="0 0 24 24"><circle cx="12" cy="12" r="11.500" fill="#0a7cff"/><path d="M5 13c-1-5 3-9 8-8 5 1 7 7 4 11s-9 3-9-1 5-6 7-3c1 2-1 4-3 3M4 9c4-8 14-6 16 1" fill="none" stroke="#fff" stroke-width="1.700"/></svg></button>
  <button class="app" aria-label="Steam"><svg viewBox="0 0 24 24"><circle cx="12" cy="12" r="11.500" fill="url(#gSteam)"/><path d="M1 12l7 4 6-5" fill="none" stroke="#fff" stroke-width="3.500"/><circle cx="16" cy="9" r="3.600" fill="#1c3a6a" stroke="#fff" stroke-width="1.500"/><circle cx="9" cy="16" r="2.700" fill="none" stroke="#fff" stroke-width="1.500"/></svg></button>
  <button class="app" aria-label="Epic Games"><svg class="epic" viewBox="0 0 24 24"><path d="M2 0h20v19l-10 5-10-5z" fill="#0c0c0e"/><text x="12" y="10" text-anchor="middle">EPIC</text><text class="s" x="12" y="17" text-anchor="middle">GAMES</text><path d="M8 19h8l-4 2z" fill="#ddd"/></svg></button>
  <button class="win"><svg viewBox="0 0 24 24"><path d="M3 1h18c1 0 2 1 2 2v21l-5-4H3c-1 0-2-1-2-2V3c0-1 1-2 2-2z" fill="#7289da"/><path d="M5 15c0-4 1-6 2-7 3-1 7-1 10 0 1 1 2 3 2 7-1 1-2 1-4 2l-1-2h-4l-1 2c-2-1-3-1-4-2z" fill="#fff"/><circle cx="9.500" cy="12" r="1.500" fill="#7289da"/><circle cx="14.500" cy="12" r="1.500" fill="#7289da"/></svg><span>#dingens ...</span></button>
  <button class="win active"><svg viewBox="0 0 24 24"><path d="M2 4h20v16H2z" fill="#fff"/><path d="M2 4h20v2H2z" fill="#cfd8e4"/><path d="M9 7h8v11H9z" fill="#0a78d7"/><path d="M4 9h4M4 12h4M4 15h4M18 9h3M18 12h3M18 15h3" stroke="#789"/></svg><span>Inkscape</span></button>
  <button class="win"><svg viewBox="0 0 24 24"><path d="M3 0h18v24H3z" fill="#fff"/><path d="M5 2h14v5H5z" fill="#20243a"/><path d="M5 10h14M5 14h14M5 18h14M5 22h14" stroke="#20243a" stroke-width="2" stroke-dasharray="2 1.900"/></svg><span>Rechner</span></button>
  <div class="tray">
    <button aria-label="Show hidden icons"><svg viewBox="0 0 16 16"><path d="M2 11l6-6 6 6" fill="none" stroke="#fff" stroke-width="1.400"/></svg></button>
    <button aria-label="Sennheiser"><svg viewBox="0 0 16 16"><path d="M.5 1.500h15v13H.5z" fill="#fff"/><path d="M2 3h12v10H2z" fill="#000"/><path d="M3 12l4-8h2L8 8h2l2-4h2l-4 8H8l1-3H7l-2 3z" fill="#fff"/></svg></button>
    <button aria-label="Display settings"><svg viewBox="0 0 16 16"><path d="M1 1h14v11H1zM4 14h8" fill="none" stroke="#fff" stroke-width="1.500"/><circle cx="8" cy="6.500" r="2.500" fill="none" stroke="#fff" stroke-width="1.800"/><path d="M8 2v2M8 9v2M3.500 6.500h2M10.500 6.500h2" stroke="#fff" stroke-width="1.500"/></svg></button>
    <button aria-label="Network"><svg viewBox="0 0 16 16"><path d="M3 15C3 8 8 3 15 3M6 15c0-5 4-9 9-9M9 15c0-3 3-6 6-6" fill="none" stroke="#aab" stroke-width="1.100"/><circle cx="13.500" cy="13.500" r="1.500" fill="#fff"/></svg></button>
    <button aria-label="Volume"><svg viewBox="0 0 16 16"><path d="M.5 6h2.500l3.500-3v10L3 10H.500z" fill="none" stroke="#fff"/><path d="M9 6c1 1 1 3 0 4M11 4c2 2 2 6 0 8M13 2c3 3 3 9 0 12" fill="none" stroke="#fff"/></svg></button>
    <div class="clock"><time>22:14</time><time>13.01.2020</time></div>
    <button class="note" aria-label="Notifications"><svg viewBox="0 0 16 16"><path d="M.5 1.500h15v11h-5L8 15.500l-2.500-3h-5z" fill="none" stroke="#fff" stroke-width="1.200"/></svg></button>
  </div>
</div>
<script src="app.js"></script>
</body>
</html>
```
FILE: styles.css
```css
* { box-sizing: border-box; }
html, body { height: 100%; }
body {
  margin: 0;
  display: flex;
  flex-direction: column;
  overflow: hidden;
  background: #fff;
  color: #000;
  font: 12px/16px "Open Sans", "Noto Sans", sans-serif;
}
button, input, select { font: inherit; color: inherit; margin: 0; padding: 0; border: 0; background: none; border-radius: 0; }
button { display: flex; align-items: center; justify-content: center; flex: none; }
h1, h2, p, ul, dl, dd { margin: 0; padding: 0; font: inherit; }
svg { flex: none; display: block; }
b { font-weight: 600; }
.sprite { position: absolute; width: 0; height: 0; }

.titlebar { flex: none; height: 23px; display: flex; align-items: center; padding-left: 2px; gap: 5px; }
.titlebar h1 { flex: 1; }
.logo { width: 16px; height: 16px; }
.winbtns { display: flex; }
.winbtns button { width: 46px; height: 22px; }
.winbtns svg { width: 10px; height: 10px; }

.menubar { flex: none; height: 21px; display: flex; align-items: center; gap: 12px; padding: 1px 0 0 8px; border-bottom: 1px solid #ddd; }

.bar { flex: none; display: flex; align-items: center; padding-left: 2px; border-bottom: 1px solid #d5d5d5; }
.bar > button { width: 26px; height: 27px; }
.bar > button svg { width: 16px; height: 16px; }
.bar > .on svg { width: 12px; height: 12px; }
.commands { height: 30px; }
.controls { height: 32px; }
.sep { flex: none; width: 12px; height: 16px; display: flex; }
.sep::before { content: ""; margin: auto; width: 1px; height: 100%; background: #aaa; }
.on { background: #cce8ff; outline: 1px solid #99d1ff; outline-offset: -1px; }

.field { display: flex; align-items: center; flex: none; color: #777; margin-right: 7px; }
.field label { margin-right: 5px; }
.field input { width: 45px; height: 21px; padding-left: 3px; border: 1px solid #a9a9a9; background: #f0f0f0; color: #777; font-size: 11px; }
.fx { padding-left: 8px; }
.fh { margin-right: 0; }
.bar > .ratio { width: 16px; margin-right: 11px; }
.bar > .ratio svg { width: 10px; height: 10px; }
.spin { display: flex; flex-direction: column; gap: 1px; width: 11px; }
.spin button { height: 10px; font-size: 7px; line-height: 8px; color: #555; background: #f0f0f0; border: 1px solid #ccc; font-family: "DejaVu Sans", sans-serif; }
.combo { position: relative; display: flex; width: 43px; height: 20px; border: 1px solid #a0a0a0; background: #fff; }
.combo select { appearance: none; width: 100%; padding: 0 16px 0 2px; font-size: 11px; line-height: 16px; }
.combo svg { position: absolute; right: 0; top: 0; bottom: 0; width: 17px; height: 100%; padding: 3px; background: #e1e1e1; border-left: 1px solid #a0a0a0; color: #555; }

.work { flex: 1; min-height: 0; display: flex; background: #f0f0f0; }
.toolbox { width: 34px; background: #fff; padding: 2px; flex: none; }
.toolbox button { width: 30px; height: 30px; }
.toolbox svg { width: 24px; height: 24px; }

.canvas-area { flex: 1; min-width: 0; display: grid; grid-template-columns: 16px 1fr 22px; grid-template-rows: 15px 1fr 16px; }
.corner { display: flex; align-items: center; justify-content: center; }
.corner svg { width: 10px; height: 10px; }
.ruler-h, .ruler-v { overflow: hidden; position: relative; }
.ruler-h svg, .ruler-v svg { position: absolute; left: 0; top: 0; width: 100%; height: 100%; }
.ruler-h text { font: 9px "Open Sans", "Noto Sans", sans-serif; fill: #555; }
.ruler-v text { font: 8px "DejaVu Sans", sans-serif; fill: #444; }
.canvas { position: relative; overflow: hidden; background: #fff; }
.page { position: absolute; left: 389px; top: -10px; bottom: -10px; width: 1125px; border: 1px solid #666; border-right: 3px solid #5a5a5a; }
.art {
  position: absolute;
  left: 265px;
  top: 419px;
  font: 57px/64px "DejaVu Sans", sans-serif;
  color: #767676;
  text-shadow: -1px 1px 1px #484848, -2px 2px 1px #5c5c5c, -2px 2px 3px #777;
}

.scroll { display: flex; color: #555; background: #f0f0f0; }
.scroll svg { width: 10px; height: 10px; margin: 3px; }
.scroll i, .scroll b { flex: 0 0 0; }
.scroll b { background: #cdcdcd; }
.scroll.v { flex-direction: column; width: 15px; }
.scroll.h { height: 15px; }
.dim { opacity: .4; }

.dock { flex: none; width: 255px; border-left: 2px solid #111; border-top: 1px solid #111; padding-bottom: 8px; display: flex; flex-direction: column; }
.dock-head { flex: none; display: flex; align-items: center; height: 24px; border-bottom: 1px solid #a0a0a0; padding-right: 5px; margin-right: 3px; }
.dock-head > svg { width: 13px; height: 13px; }
.dock-head h2 { flex: 1; }
.dock-head button { margin-left: 11px; }
.dock-head button svg { width: 11px; height: 11px; }
.dock-body { flex: 1; min-height: 0; display: flex; gap: 2px; padding: 4px; border-bottom: 1px solid #fff; margin-right: 4px; }
.history { flex: 1; list-style: none; background: #fff; overflow: hidden; padding-top: 2px; }
.history li { display: flex; align-items: center; height: 23px; position: relative; padding-left: 76px; }
.history li > b { position: absolute; left: 45px; font-weight: bold; }
.history li > svg { position: absolute; left: 7px; width: 13px; height: 13px; }
.history button { position: absolute; left: 59px; width: 9px; height: 9px; border: 1px solid #999; background: linear-gradient(#34508f, #34508f) center/5px 1px no-repeat, linear-gradient(#34508f, #34508f) center/1px 5px no-repeat, #f8f8f8; }
.history .current { background: #f0f0f0; }

.snapbar { flex: none; width: 30px; background: #fff; padding: 2px 1px 0 3px; }
.snapbar button { width: 26px; height: 26px; }
.snapbar svg { width: 16px; height: 16px; color: #777; }
.snapbar .path svg { color: #1c7c2c; }
.snapbar .sep { width: 26px; height: 12px; }
.snapbar .sep::before { width: 16px; height: 1px; }

.palette { flex: none; height: 20px; display: flex; border-bottom: 1px solid #e6e6e6; box-shadow: inset 0 -3px #fff; }
.swatches { flex: 1; min-width: 0; height: 16px; border-top: 2px solid #000; border-left: 2px solid #000; display: flex; overflow: hidden; }
.swatches button { width: 14px; height: 14px; }
.palette > button { width: 10px; height: 12px; }
.palette > button svg { width: 5px; height: 8px; }
.pal { flex: none; }
.scroll.pal svg { margin: 3px 4px; }
.scroll.pal svg:last-child { margin-right: 12px; }

.status { flex: none; height: 28px; background: #f0f0f0; display: flex; align-items: center; }
.status dl { display: grid; line-height: 14px; flex: none; }
.style { grid-template-columns: 70px 54px; padding-left: 2px; }
.status .field { color: #000; margin-right: 2px; }
.status .field label { margin-right: 2px; }
.status .field input { width: 37px; padding-left: 4px; font-size: 12px; }
.vsep { width: 1px; height: 28px; background: #aaa; flex: none; }
.mini { width: 20px; }
.mini svg { width: 10px; height: 10px; }
.status .layer { width: 84px; height: 28px; }
.status .layer select { font-weight: 600; }
.hint { flex: 1; padding-left: 2px; white-space: nowrap; }
.coords { grid-template-columns: 16px 44px; padding-left: 3px; }
.coords dd { font-family: "Liberation Mono", monospace; text-align: right; }
.status .zoom { margin: 0 0 0 10px; }
.status .zoom input { width: 45px; background: #fff; color: #000; padding-left: 6px; }
.zoom .spin button { color: #000; }

.taskbar { flex: none; height: 39px; display: flex; background: linear-gradient(90deg, #272b40, #252c40 45%, #222846 60%, #252b40); color: #fff; }
.taskbar button { height: 39px; }
.start { width: 49px; }
.start svg { width: 16px; height: 16px; }
.search { width: 343px; background: #333; border: 1px solid #555; border-bottom: 0; display: flex; align-items: center; padding-left: 11px; gap: 11px; }
.search svg { width: 16px; height: 16px; }
.search input { flex: 1; font-size: 14px; }
.search input::placeholder { color: #ddd; opacity: 1; }
.sys { width: 48px; }
.sys svg { width: 17px; height: 17px; }
.app { width: 44px; }
.sys + .app { margin-left: 2px; }
.app svg, .win svg { width: 24px; height: 24px; }
.app text { font: bold 10px "Open Sans", sans-serif; fill: #fff; }
.app .epic text { font: bold 8px Roboto, sans-serif; }
.app .epic .s { font-size: 4px; }
.win { width: 107px; position: relative; }
.taskbar .win { justify-content: flex-start; padding-left: 8px; gap: 4px; }
.win::after { content: ""; position: absolute; left: 4px; right: 4px; bottom: 0; height: 2px; background: #5eb4e4; }
.active { background: #4e5364; }
.active::after { left: 0; right: 0; }
.tray { margin-left: auto; display: flex; }
.tray button { width: 24px; }
.tray svg { width: 16px; height: 16px; }
.clock { width: 64px; display: flex; flex-direction: column; align-items: center; justify-content: center; line-height: 18px; }
.tray .note { width: 44px; margin-right: 10px; }
```
FILE: app.js
```js
const NS = 'http://www.w3.org/2000/svg';
const PX_PER_MM = 5.346;
const ORIGIN_X = 389;   // page left edge inside the canvas
const TICK_250 = 106;   // y of the 250 mm mark inside the canvas

function el(parent, name, attrs, text) {
  const node = document.createElementNS(NS, name);
  for (const k in attrs) node.setAttribute(k, attrs[k]);
  if (text !== undefined) node.textContent = text;
  parent.appendChild(node);
  return node;
}

function drawRulers() {
  const h = document.getElementById('rulerH');
  const v = document.getElementById('rulerV');
  h.textContent = v.textContent = '';

  const hs = el(h, 'svg', {});
  const w = h.clientWidth;
  let d = 'M3 14.5H' + w;
  for (let mm = -72; ORIGIN_X + mm * PX_PER_MM < w; mm++) {
    const x = Math.round(ORIGIN_X + mm * PX_PER_MM) + 0.5;
    const len = mm % 10 === 0 ? 11 : mm % 2 === 0 ? 5 : 3;
    d += `M${x} ${14 - len}V14`;
    if (mm % 10 === 0) el(hs, 'text', { x: x + 2, y: 11 }, mm);
  }
  el(hs, 'path', { d, stroke: '#000', fill: 'none' });
  el(hs, 'path', { d: 'M537 10h8l-4 5z' });

  const vs = el(v, 'svg', {});
  const height = v.clientHeight;
  let e = 'M15.5 2V' + height;
  for (let i = -7; ; i++) {
    const y = Math.round(TICK_250 + i * 2.5 * PX_PER_MM) + 0.5;
    if (y > height) break;
    const len = i % 10 === 0 ? 11 : i % 2 === 0 ? 5 : 3;
    e += `M${15 - len} ${y}H15`;
    if (i % 10 === 0) {
      String(250 - i * 2.5).split('').forEach((c, n) => el(vs, 'text', { x: 4, y: y + 8 + n * 8 }, c));
    }
  }
  el(vs, 'path', { d: e, stroke: '#000', fill: 'none' });
  el(vs, 'path', { d: 'M11 486v8l5-4z' });
}

const COLORS = `000000 1a1a1a 333333 4d4d4d 666666 808080 999999 b3b3b3 cccccc e6e6e6 ececec f2f2f2 f9f9f9 ffffff
800000 ff0000 808000 ffff00 008000 00ff00 008080 00ffff 000080 0000ff 800080 ff00ff
2b0000 550000 800000 aa0000 d40000 ff0000 ff2a2a ff5555 ff8080 ffaaaa ffd5d5
280b0b 501616 782121 a02c2c c83737 d35f5f de8787 e9afaf f4d7d7
241c1c 483737 6c5353 916f6f ac9393 c8b7b7 e3dbdb
2b1100 552200 803300 aa4400 d45500 ff6600 ff7f2a ff9955 ffb380 ffccaa ffe6d5
28170b 502d16 784421 a05a2c c87137 d38d5f deaa87 e9c6af f4e3d7
241f1c 483e37 6c5d53 917c6f ac9d93 c8beb7 e3dedb
2b2200 554400 806600 aa8800 d4aa00 ffcc00 ffd42a ffdd55 ffe680 ffeeaa fff6d5
28220b 504416 786721 a08a2c c8ab37 d3bc5f decd87 e9ddaf f4eed7
24221c 484537 6c6753 918a6f aca793 c8c4b7 e3e2db
222b00 445500 668000 88aa00 aad400 ccff00 d4ff2a ddff55 e5ff80 eeffaa f6ffd5
22280b 445016 677821 89a02c abc837 bcd35f cdde87 dde9af eef4d7
22241c 454837 676c53 8a916f a7ac93 c4c8b7 e2e3db
112b00 225500`.split(/\s+/);

function fillPalette() {
  const box = document.getElementById('swatches');
  const none = document.createElement('button');
  none.setAttribute('aria-label', 'No color');
  const svg = el(none, 'svg', { viewBox: '0 0 14 14', width: 14, height: 14 });
  el(svg, 'path', { d: 'M0 0h14v14H0z', fill: '#fff' });
  el(svg, 'path', { d: 'M1 0l12 14M13 0L1 14', stroke: '#7a1010', 'stroke-width': 1.5 });
  box.appendChild(none);
  for (const c of COLORS) {
    const b = document.createElement('button');
    b.setAttribute('aria-label', '#' + c);
    b.style.background = '#' + c;
    box.appendChild(b);
  }
}

fillPalette();
drawRulers();
window.addEventListener('resize', drawRulers);
```
